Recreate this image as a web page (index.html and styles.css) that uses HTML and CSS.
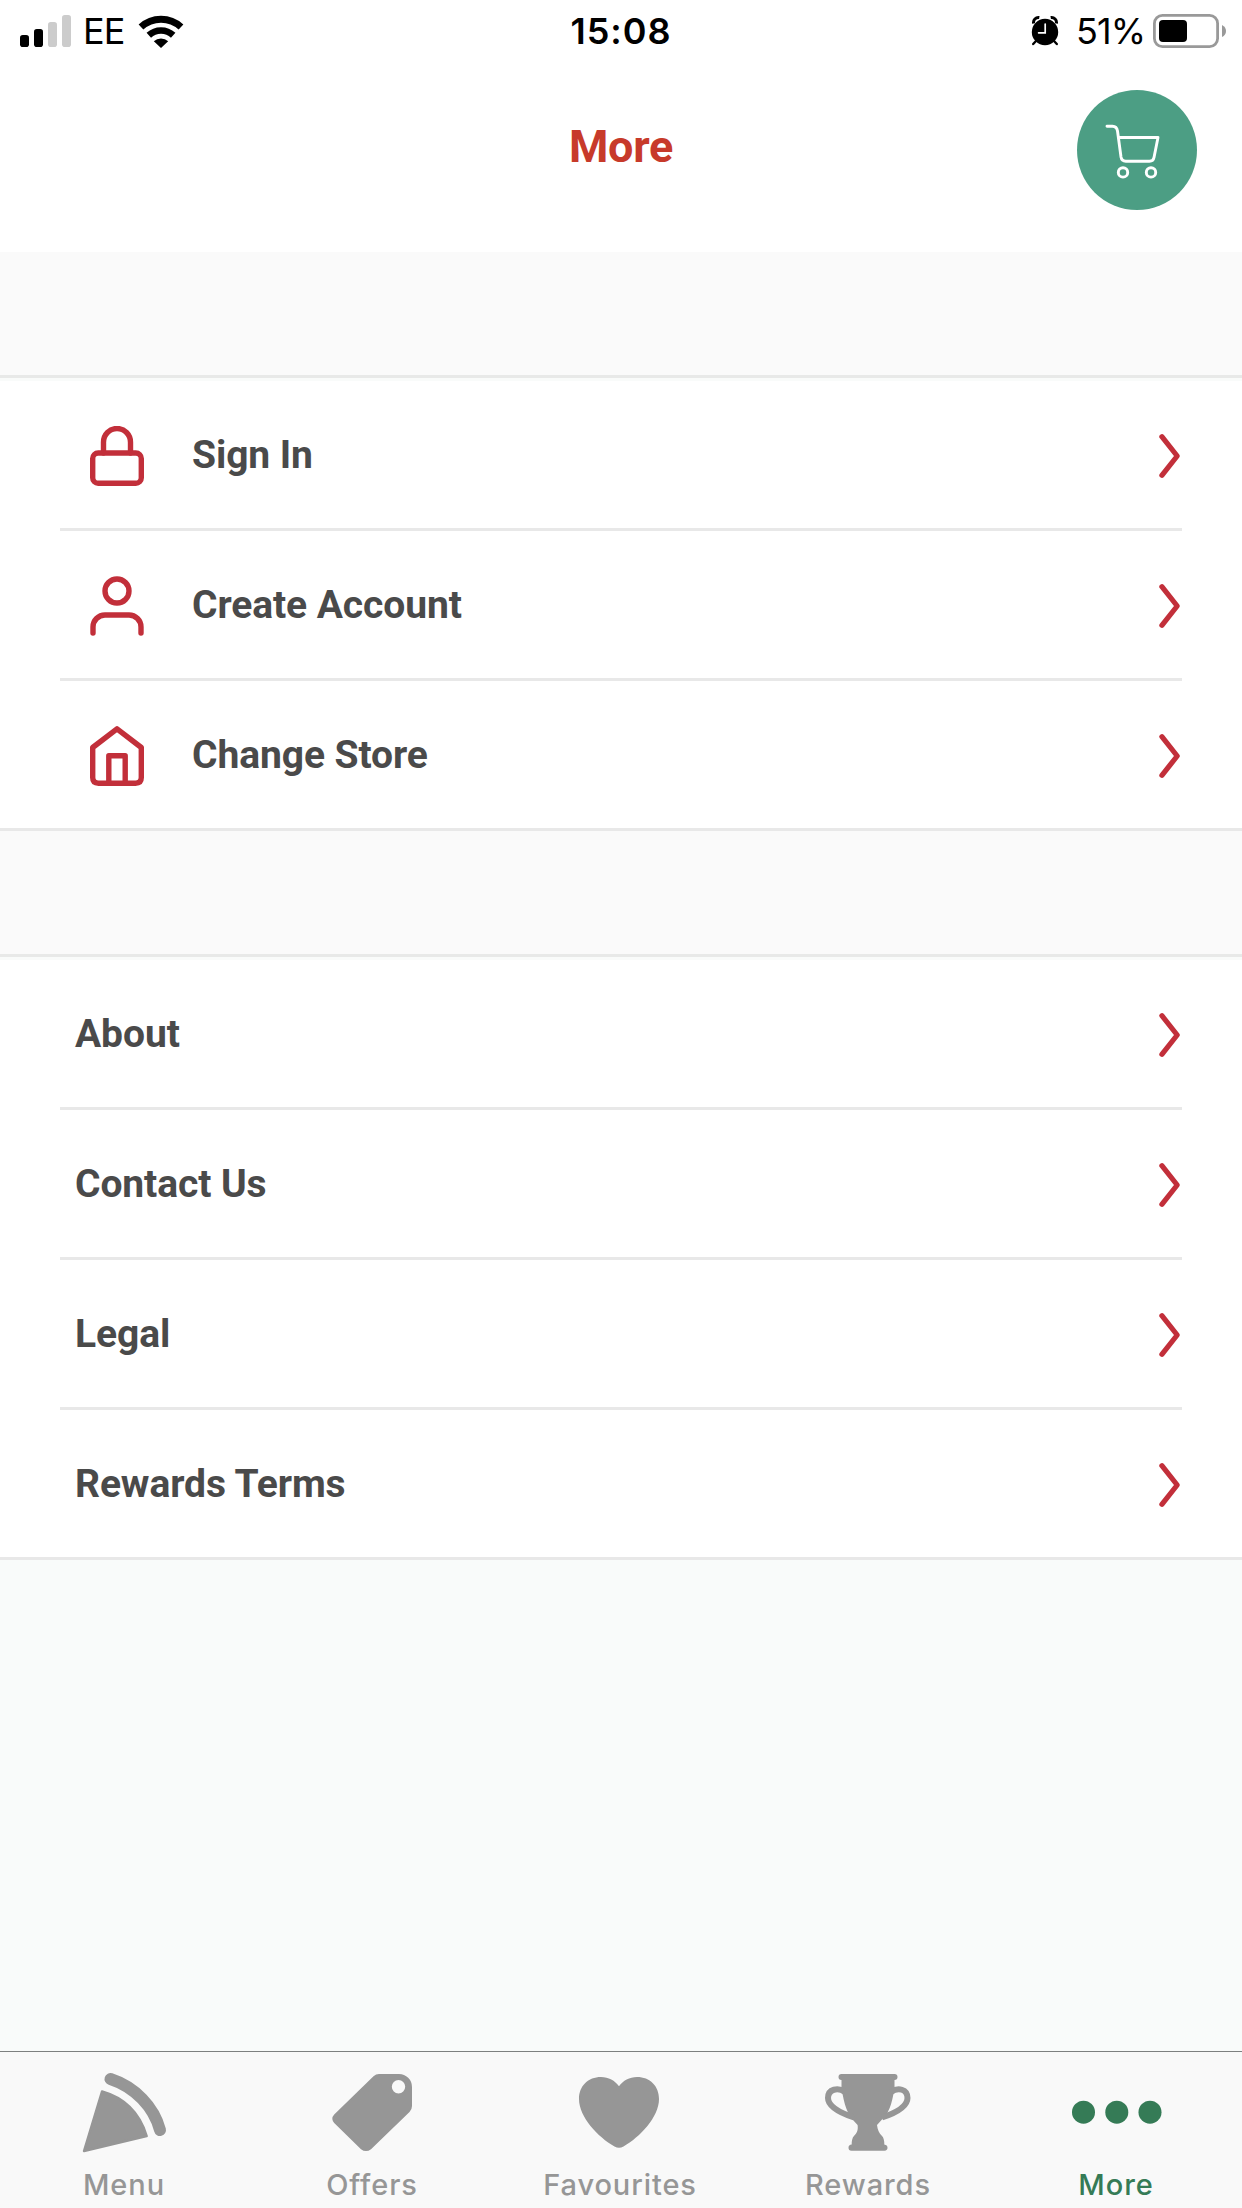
FILE: index.html
```html
<!DOCTYPE html>
<html lang="en">
<head>
<meta charset="utf-8">
<title>More</title>
<link rel="stylesheet" href="styles.css">
</head>
<body>
<svg width="0" height="0" class="defs" aria-hidden="true">
  <symbol id="chevron" viewBox="0 0 24 48"><path d="M3.9 4.700 19.200 24 3.900 43.300" fill="none" stroke="#c22f3a" stroke-width="5.2" stroke-linecap="round" stroke-linejoin="round"/></symbol>
</svg>
<div class="screen">
  <div class="status">
    <div class="status-left">
      <svg width="51" height="32" viewBox="0 0 51 32"><rect y="20" width="9" height="12" rx="2.8"/><rect x="14" y="14" width="9" height="18" rx="2.8"/><g fill="#ccc"><rect x="28" y="7" width="9" height="25" rx="2.8"/><rect x="42" width="9" height="32" rx="2.8"/></g></svg>
      <span class="carrier">EE</span>
      <svg class="wifi" width="46" height="33" viewBox="0 0 46 33"><path d="M3 12A29.5 29.5 0 0 1 43 12" fill="none" stroke="#000" stroke-width="7"/><path d="M10.8 20.2A18 18 0 0 1 35.2 20.2" fill="none" stroke="#000" stroke-width="6.6"/><path d="M15.8 26.2A11 11 0 0 1 30.2 26.2L23 33Z"/></svg>
    </div>
    <div class="clock">15:08</div>
    <div class="status-right">
      <svg width="28" height="30" viewBox="0 0 28 30"><circle cx="14" cy="16" r="13.2"/><path d="M2.6 7.5A5 5 0 0 1 8.3 1.6M19.7 1.6A5 5 0 0 1 25.4 7.5" fill="none" stroke="#000" stroke-width="3"/><path d="M5 25 2.2 28M23 25l2.8 3" stroke="#000" stroke-width="2.4" stroke-linecap="round"/><path d="M14.2 8v8.8H7.6" fill="none" stroke="#fff" stroke-width="1.7" stroke-linecap="round"/></svg>
      <span class="percent">51%</span>
      <svg width="74" height="34" viewBox="0 0 74 34"><rect x="1.4" y="1.4" width="63.2" height="31.2" rx="8" fill="none" stroke="#999" stroke-width="2.8"/><rect x="6" y="6" width="28" height="22" rx="4"/><path d="M69 11Q73 13 73 17T69 23Z" fill="#999"/></svg>
    </div>
  </div>
  <header class="header">
    <h1>More</h1>
    <button class="cart" aria-label="Cart">
      <svg width="120" height="120" viewBox="0 0 120 120" fill="none" stroke="#fff" stroke-width="2.9" stroke-linecap="round" stroke-linejoin="round"><path d="M30 36.2H35.5Q39.8 36.2 40.5 41L44 67Q44.7 71.2 48.8 71.2H72.5Q76.3 71.2 77 67.5L81 47.5H41.5"/><circle cx="46" cy="82.4" r="4.7"/><circle cx="74" cy="82.4" r="4.7"/></svg>
    </button>
  </header>
  <main>
    <ul class="group icons">
      <li><svg class="icon" viewBox="0 0 54 60"><path d="M13.5 27V16.2a13.4 13.6 0 0 1 27 0V27"/><rect x="2.7" y="27" width="48.6" height="30.2" rx="5.5"/></svg><span>Sign In</span><svg class="chev"><use href="#chevron"/></svg></li>
      <li><svg class="icon" viewBox="0 0 54 60"><circle cx="27" cy="15" r="12"/><path d="M3 57V51A12 12 0 0 1 15 39H39A12 12 0 0 1 51 51V57"/></svg><span>Create Account</span><svg class="chev"><use href="#chevron"/></svg></li>
      <li><svg class="icon" viewBox="0 0 54 60"><path d="M27 2.8 51.3 21.5V51.5Q51.3 57.2 45.5 57.2H8.5Q2.7 57.2 2.7 51.5V21.5ZM18.8 57V29.8H35.2V57"/></svg><span>Change Store</span><svg class="chev"><use href="#chevron"/></svg></li>
    </ul>
    <ul class="group">
      <li><span>About</span><svg class="chev"><use href="#chevron"/></svg></li>
      <li><span>Contact Us</span><svg class="chev"><use href="#chevron"/></svg></li>
      <li><span>Legal</span><svg class="chev"><use href="#chevron"/></svg></li>
      <li><span>Rewards Terms</span><svg class="chev"><use href="#chevron"/></svg></li>
    </ul>
  </main>
  <nav class="tabs">
    <a class="tab"><svg viewBox="0 0 100 90"><path d="M28 27.500Q62 37 72.700 72L10 87Z" stroke="#969696" stroke-width="2.400" stroke-linejoin="round"/><path d="M36.500 15C61 23 80 43 86 66" fill="none" stroke="#969696" stroke-width="12" stroke-linecap="round"/></svg><span>Menu</span></a>
    <a class="tab"><svg viewBox="-1 0 100 90"><path fill-rule="evenodd" d="M56 10H76A13 13 0 0 1 89 23V42Q89 45.5 86.5 48L48 85.2Q43 89 38 85.2L11.2 59Q7.5 54.5 11.2 50.5L50.5 12.3Q53 10 56 10ZM75.5 16A6.7 6.7 0 1 0 75.5 29.4 6.7 6.7 0 1 0 75.5 16Z"/></svg><span>Offers</span></a>
    <a class="tab"><svg viewBox="1 0 100 90"><path d="M50 22.3C54 16.5 60.5 13 68 13C81 13 90 22 90 35C90 53 71 73 54.5 82.5Q50 85 45.5 82.5C29 73 10 53 10 35C10 22 19 13 32 13C39.5 13 46 16.5 50 22.3Z"/></svg><span>Favourites</span></a>
    <a class="tab"><svg viewBox="0 0 100 90"><path d="M23.5 10H76.5Q79.5 10 79.5 13T76.5 16V23C74 42 70 50 64 55.5L59 61C59.7 66 61 69 64 72Q66.3 74 66.3 80.5Q69.5 81 69.500 83.700T66.500 86.700H33.500Q30.500 86.700 30.500 83.700T33.700 80.500Q33.700 74 36 72C39 69 40.300 66 39.600 61L34.500 55.500C30 50 26 42 23.500 23V16Q20.500 16 20.500 13T23.500 10Z"/><path d="M27 28C20 23 10 25 10 34C10 42 21 48.500 36 53.500M73 28C80 23 89.500 25 89.500 34C89.500 42 79 48.500 64 53.500" fill="none" stroke="#969696" stroke-width="6"/></svg><span>Rewards</span></a>
    <a class="tab active"><svg viewBox="-1 0 100 90"><circle cx="16.500" cy="48.200" r="11.500"/><circle cx="49.800" cy="48.200" r="11.500"/><circle cx="83" cy="48.200" r="11.500"/></svg><span>More</span></a>
  </nav>
</div>
</body>
</html>
```
FILE: styles.css
```css
* { box-sizing: border-box; }
body { margin: 0; background: #f9fbfa; font-family: Roboto, sans-serif; }
.defs { display: none; }
svg { display: block; flex: none; }
.screen { width: 1242px; height: 2208px; display: flex; flex-direction: column; }

.status { height: 60px; background: #fff; display: grid; grid-template-columns: 1fr auto 1fr; font: 36px/62px Inter, sans-serif; color: #000; }
.status-left, .status-right { display: flex; align-items: center; }
.status-left { padding-left: 20px; }
.status-right { justify-content: flex-end; padding-right: 15px; }
.carrier { margin-left: 12px; letter-spacing: -1px; }
.wifi { margin-left: 14px; }
.clock { font-weight: 580; letter-spacing: 1px; }
.percent { margin: 0 8px 0 17px; letter-spacing: -1px; }

.header { height: 192px; background: #fff; display: grid; grid-template-columns: 1fr auto 1fr; padding: 30px 45px 0; }
.header h1 { grid-column: 2; margin: 0; font-size: 45px; line-height: 113px; font-weight: 700; letter-spacing: -.3px; color: #c73a2a; }
.cart { grid-column: 3; justify-self: end; width: 120px; height: 120px; padding: 0; border: 0; border-radius: 50%; background: #4c9e84; }

main { flex: 1; }
.group { list-style: none; margin: 0; padding: 0; background: #fff; border-top: 123px solid #fafafa; border-bottom: 3px solid #e8e8e8; }
.group::before { content: ""; display: block; height: 3px; border-top: 3px solid #e8e9e8; background: #f9fbfa; }
.group li { height: 150px; margin: 0 60px; padding: 0 0 0 15px; border-bottom: 3px solid #e8e8e8; display: flex; align-items: center; font-size: 39px; font-weight: 700; letter-spacing: -.09px; color: #4a4a4a; }
.group li:last-child { height: 147px; border-bottom: 0; }
.icons li { padding-left: 30px; }
.icon { width: 54px; height: 60px; margin: 3px 48px 0 0; fill: none; stroke: #c22f3a; stroke-width: 5.4; stroke-linecap: round; stroke-linejoin: round; }
.chev { width: 24px; height: 48px; margin: 3px 0 0 auto; }

.tabs { height: 157px; border-top: 1px solid #7d8080; background: #f9f9f9; display: grid; grid-template-columns: repeat(5, 1fr); padding-right: 2px; }
.tab { display: flex; flex-direction: column; align-items: center; color: #969696; font: 450 29px/36px Inter, sans-serif; letter-spacing: .9px; }
.tab svg { width: 100px; height: 90px; margin: 12px 0 13px; fill: currentColor; }
.tab.active { color: #357b56; }
```
